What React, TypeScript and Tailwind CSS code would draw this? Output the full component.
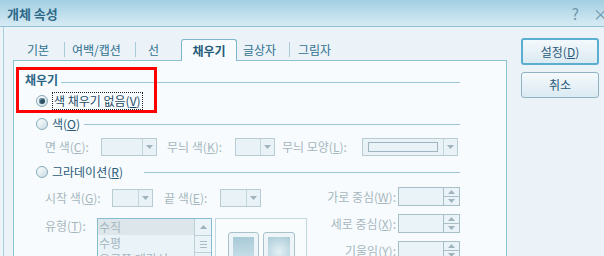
import React from "react";

const font = "font-['Noto_Sans_CJK_KR','Noto_Sans',sans-serif]";

function Radio({ checked }: { checked?: boolean }) {
  return (
    <span className="w-[12px] h-[12px] rounded-full border border-[#86a9b9] bg-gradient-to-br from-[#ffffff] to-[#c9dce4] flex items-center justify-center shrink-0">
      {checked && <span className="w-[6px] h-[6px] rounded-full bg-[#2c4f63] shadow-[inset_1px_1px_1px_#7d9fb0]" />}
    </span>
  );
}

function Arrow({ up }: { up?: boolean }) {
  return (
    <svg width="7" height="4" viewBox="0 0 7 4">
      {up ? <path d="M0 4 L3.5 0 L7 4 Z" fill="#9fb3bc" /> : <path d="M0 0 L7 0 L3.5 4 Z" fill="#9fb3bc" />}
    </svg>
  );
}

function Dropdown({ w, inner }: { w: string; inner?: boolean }) {
  return (
    <div className={`${w} h-[18px] border border-[#b8ccd4] bg-[#e9f2f7] flex shrink-0`}>
      <div className="flex-1 flex items-center px-[5px]">
        {inner && <div className="w-full h-[10px] border border-[#9fb6c0]" />}
      </div>
      <div className="w-[14px] border-l border-[#c4d6dd] flex items-center justify-center">
        <Arrow />
      </div>
    </div>
  );
}

function Spin() {
  return (
    <div className="w-[62px] h-[19px] border border-[#a9bfc8] bg-[#eaf3f8] flex shrink-0">
      <div className="flex-1" />
      <div className="w-[16px] border-l border-[#a9bfc8] flex flex-col">
        <div className="flex-1 flex items-center justify-center border-b border-[#a9bfc8]">
          <Arrow up />
        </div>
        <div className="flex-1 flex items-center justify-center">
          <Arrow />
        </div>
      </div>
    </div>
  );
}

const dis = "text-[#a6b7be]";

export default function App() {
  const tabs = [
    { name: "기본", w: "w-[51px]", pl: "pl-[14px]" },
    { sep: true },
    { name: "여백/캡션", w: "w-[70px]", pl: "pl-[7px]" },
    { sep: true },
    { name: "선", w: "w-[45px]", pl: "pl-[12px]" },
    { active: true, name: "채우기" },
    { name: "글상자", w: "w-[52px]", pl: "pl-[6px]" },
    { sep: true },
    { name: "그림자", w: "w-[60px]", pl: "pl-[8px]" },
  ];

  return (
    <div className={`w-[604px] h-[256px] overflow-hidden relative bg-[#ebf3f9] text-[12px] leading-none ${font}`}>
      {/* title bar */}
      <div className="h-[27px] flex items-center bg-gradient-to-b from-[#a2cfe2] to-[#d7ebf4] border-b border-[#8fc1d4] pl-[7px]">
        <span className="font-bold text-[13px] text-[#2d6a8a]">개체 속성</span>
        <div className="ml-auto flex items-center gap-[14px] text-[15px] text-[#6d97aa] -mr-[4px]">
          <span>?</span>
          <span>×</span>
        </div>
      </div>

      <div className="flex h-[229px]">
        {/* tab area */}
        <div className="w-[504px] ml-[3px] border-l border-[#a9cfdd] pl-[9px] pt-[12px] flex flex-col">
          <div className="h-[21px] flex items-center">
            {tabs.map((t, i) =>
              t.sep ? (
                <span key={i} className="w-px h-[15px] bg-[#a9cbd8]" />
              ) : t.active ? (
                <div
                  key={i}
                  className="w-[56px] h-[22px] self-start relative z-10 rounded-t-[3px] border border-b-0 border-[#7db6cc] bg-[#f7fbfd] flex items-center justify-center font-bold text-[#1f5a78]"
                >
                  {t.name}
                </div>
              ) : (
                <span key={i} className={`${t.w} ${t.pl} text-[#30708f]`}>
                  {t.name}
                </span>
              )
            )}
          </div>

          <div className="flex-1 w-[494px] border-t border-l border-r border-[#8cc3d6] bg-[#f7fbfd] pl-[11px] pr-[46px]">
            {/* group label */}
            <div className="mt-[11px] h-[16px] flex items-center">
              <span className="font-bold text-[#2a6585]">채우기</span>
              <span className="flex-1 h-px bg-[#9cc6d6] ml-[3px] translate-y-[2px]" />
            </div>

            {/* no fill */}
            <div className="mt-[4px] h-[18px] flex items-center">
              <span className="ml-[11px]">
                <Radio checked />
              </span>
              <span className="ml-[4px] h-[18px] px-[1px] flex items-center border border-dotted border-[#222] text-[#1f4a66]">
                색 채우기 없음(<span className="underline">V</span>)
              </span>
            </div>

            {/* color */}
            <div className="mt-[6px] h-[16px] flex items-center">
              <span className="ml-[11px]">
                <Radio />
              </span>
              <span className="ml-[4px] text-[#2a5a78]">
                색(<span className="underline">O</span>)
              </span>
              <span className="flex-1 h-px bg-[#9cc6d6] ml-[4px]" />
            </div>

            <div className={`mt-[6px] h-[18px] flex items-center ${dis}`}>
              <span className="ml-[20px] w-[56px]">면 색(<span className="underline">C</span>):</span>
              <Dropdown w="w-[56px]" />
              <span className="ml-[10px] w-[68px]">무늬 색(<span className="underline">K</span>):</span>
              <Dropdown w="w-[40px]" />
              <span className="ml-[7px] w-[80px]">무늬 모양(<span className="underline">L</span>):</span>
              <Dropdown w="w-[96px]" inner />
            </div>

            {/* gradation */}
            <div className="mt-[8px] h-[16px] flex items-center">
              <span className="ml-[11px]">
                <Radio />
              </span>
              <span className="ml-[4px] w-[92px] text-[#2a5a78]">
                그라데이션(<span className="underline">R</span>)
              </span>
              <span className="flex-1 h-px bg-[#9cc6d6]" />
            </div>

            <div className={`mt-[8px] flex ${dis}`}>
              <div className="flex flex-col">
                <div className="h-[19px] flex items-center">
                  <span className="ml-[20px] w-[67px]">시작 색(<span className="underline">G</span>):</span>
                  <Dropdown w="w-[41px]" />
                  <span className="ml-[11px] w-[56px]">끝 색(<span className="underline">E</span>):</span>
                  <Dropdown w="w-[41px]" />
                </div>
                <div className="mt-[11px] flex">
                  <span className="ml-[20px] w-[52px] pt-[2px]">유형(<span className="underline">T</span>):</span>
                  <div className="w-[115px] h-[50px] border border-[#86bdd2] bg-[#eaf3f8] flex">
                    <div className="flex-1 flex flex-col">
                      <span className="h-[16px] bg-[#dde6ea] pl-[1px] flex items-center">수직</span>
                      <span className="h-[16px] pl-[1px] flex items-center">수평</span>
                      <span className="h-[16px] pl-[1px] flex items-center">오른쪽 대각선</span>
                    </div>
                    <div className="w-[17px] border-l border-[#bcd0d8] flex flex-col">
                      <div className="h-[17px] border-b border-[#bcd0d8] flex items-center justify-center">
                        <Arrow up />
                      </div>
                      <div className="h-[17px] flex flex-col items-center justify-center gap-[2px] border-b border-[#bcd0d8]">
                        <span className="w-[7px] h-px bg-[#a9bcc4]" />
                        <span className="w-[7px] h-px bg-[#a9bcc4]" />
                        <span className="w-[7px] h-px bg-[#a9bcc4]" />
                      </div>
                    </div>
                  </div>
                  <div className="ml-[3px] w-[92px] h-[50px] border border-[#c3d8e0] bg-[#f9fcfd] flex gap-[4px] pl-[12px] pt-[13px]">
                    <div className="w-[31px] h-[40px] rounded-[3px] border border-[#a9c1cb] bg-[#eef5f8] p-[4px]">
                      <div className="w-full h-full bg-gradient-to-b from-[#a8cad7] to-[#d5e8ef]" />
                    </div>
                    <div className="w-[32px] h-[40px] rounded-[3px] border border-[#a9c1cb] bg-[#eef5f8] p-[4px]">
                      <div className="w-full h-full bg-[radial-gradient(circle,#e4f1f5,#a9cad7)]" />
                    </div>
                  </div>
                </div>
              </div>

              <div className="ml-auto flex flex-col gap-[8px] -mt-[1px]">
                <div className="h-[19px] flex items-center justify-end">
                  <span className="mr-[2px]">가로 중심(<span className="underline">W</span>):</span>
                  <Spin />
                </div>
                <div className="h-[19px] flex items-center justify-end">
                  <span className="mr-[2px]">세로 중심(<span className="underline">X</span>):</span>
                  <Spin />
                </div>
                <div className="h-[19px] flex items-center justify-end">
                  <span className="mr-[2px]">기울임(<span className="underline">Y</span>):</span>
                  <Spin />
                </div>
              </div>
            </div>
          </div>
        </div>

        {/* buttons */}
        <div className="pl-[14px] pt-[11px] flex flex-col gap-[7px]">
          <button className="w-[78px] h-[27px] rounded-[3px] border-2 border-[#5aaed0] bg-gradient-to-b from-[#f4f9fc] to-[#dbeaf2] text-[#2a5a78] flex items-center justify-center">
            설정(<span className="underline">D</span>)
          </button>
          <button className="w-[78px] h-[26px] rounded-[3px] border border-[#8fb3c3] bg-gradient-to-b from-[#f4f9fc] to-[#dbeaf2] text-[#2a5a78] flex items-center justify-center">
            취소
          </button>
        </div>
      </div>

      {/* annotation */}
      <div className="absolute left-[16px] top-[67px] w-[141px] h-[46px] border-[3px] border-[#ff0000] pointer-events-none" />
    </div>
  );
}
